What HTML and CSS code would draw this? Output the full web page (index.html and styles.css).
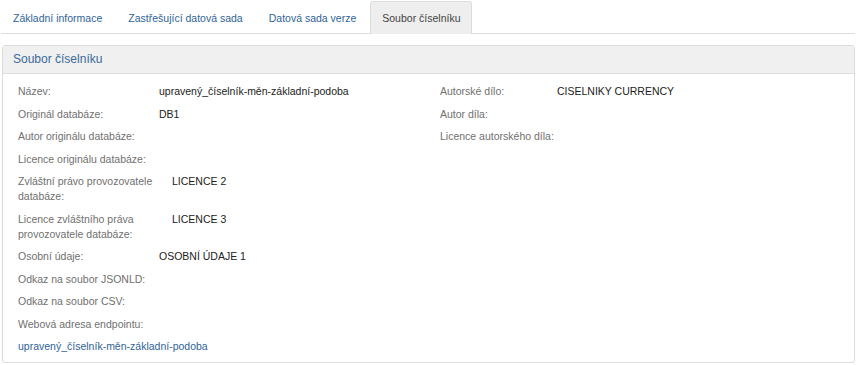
FILE: index.html
```html
<!DOCTYPE html>
<html lang="cs">
<head>
    <meta charset="UTF-8">
    <title>Soubor číselníku</title>
    <link rel="stylesheet" href="styles.css">
</head>
<body>
    <ul class="tabs">
        <li><a href="#">Základní informace</a></li>
        <li><a href="#">Zastřešující datová sada</a></li>
        <li><a href="#">Datová sada verze</a></li>
        <li class="active"><a href="#">Soubor číselníku</a></li>
    </ul>
    <div class="panel">
        <div class="panel-heading">Soubor číselníku</div>
        <div class="panel-body">
            <div class="cols">
                <div class="col">
                    <div class="row"><div class="label">Název:</div><div class="value">upravený_číselník-měn-základní-podoba</div></div>
                    <div class="row"><div class="label">Originál databáze:</div><div class="value">DB1</div></div>
                    <div class="row"><div class="label">Autor originálu databáze:</div><div class="value"></div></div>
                    <div class="row"><div class="label">Licence originálu databáze:</div><div class="value"></div></div>
                    <div class="row"><div class="label">Zvláštní právo provozovatele databáze:</div><div class="value">LICENCE 2</div></div>
                    <div class="row"><div class="label">Licence zvláštního práva provozovatele databáze:</div><div class="value">LICENCE 3</div></div>
                    <div class="row"><div class="label">Osobní údaje:</div><div class="value">OSOBNÍ ÚDAJE 1</div></div>
                    <div class="row"><div class="label">Odkaz na soubor JSONLD:</div><div class="value"></div></div>
                    <div class="row"><div class="label">Odkaz na soubor CSV:</div><div class="value"></div></div>
                    <div class="row"><div class="label">Webová adresa endpointu:</div><div class="value"></div></div>
                </div>
                <div class="col right">
                    <div class="row"><div class="label">Autorské dílo:</div><div class="value">CISELNIKY CURRENCY</div></div>
                    <div class="row"><div class="label">Autor díla:</div><div class="value"></div></div>
                    <div class="row"><div class="label">Licence autorského díla:</div><div class="value"></div></div>
                </div>
            </div>
            <a class="file-link" href="#">upravený_číselník-měn-základní-podoba</a>
        </div>
    </div>
</body>
</html>
```

FILE: styles.css
```css
body { margin: 0; padding: 0 3px 0 1px; font-family: 'Liberation Sans', Arial, sans-serif; font-size: 10.5px; color: #333; background: #fff; }
a { text-decoration: none; color: #2f6499; }
.tabs { list-style: none; margin: 0 0 11px 0; padding: 1px 0 0 0; display: flex; border-bottom: 1px solid #ddd; height: 32px; }
.tabs li { margin-right: 2px; }
.tabs a { display: block; padding: 0 11px; line-height: 32px; border: 1px solid transparent; border-bottom: none; }
.tabs .active a { background: #eee; border-color: #ddd; color: #444; border-radius: 3px 3px 0 0; }
.panel { margin-left: 1px; border: 1px solid #ddd; border-radius: 3px; height: 316px; box-shadow: 0 1px 1px rgba(0,0,0,0.05); }
.panel-heading { background: #f0f0f0; border-bottom: 1px solid #ddd; height: 27px; line-height: 27px; padding: 0 10px; font-size: 12px; color: #3a6a9b; }
.panel-body { padding: 10px 15px 0 15px; }
.cols { display: flex; }
.col { flex: 0 0 422px; }
.col.right { flex: 1; }
.row { display: flex; line-height: 15px; margin-bottom: 7.5px; }
.label { flex: 0 0 auto; box-sizing: border-box; min-width: 141px; max-width: 154px; padding-right: 18px; color: #707070; }
.right .label { min-width: 117px; }
.value { color: #222; }
.file-link { display: block; margin-top: 1px; }
```
